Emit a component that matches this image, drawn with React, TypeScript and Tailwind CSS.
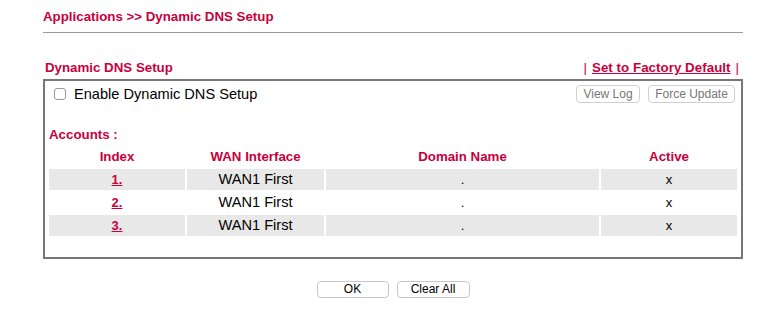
import React from "react";

const RED = "text-[#c8003c]";

export default function App() {
  const rows = ["1.", "2.", "3."];
  return (
    <div className="w-[783px] h-[309px] bg-white overflow-hidden" style={{ fontFamily: '"Liberation Sans", Arial, sans-serif' }}>
      <div className="ml-[43px] w-[700px] pt-[8px]">
        <div className={`text-[13.3px] leading-[18px] font-bold ${RED}`}>Applications &gt;&gt; Dynamic DNS Setup</div>
        <div className="mt-[6px] h-px bg-[#999]" />
        <div className="mt-[27px] flex items-center justify-between pl-[2px] pr-[4px] h-[16px]">
          <div className={`text-[13.3px] leading-[16px] font-bold ${RED}`}>Dynamic DNS Setup</div>
          <div className={`flex items-center text-[13.3px] leading-[16px] font-bold ${RED}`}>
            <span className="font-normal">|</span>
            <span className="ml-[5px] underline tracking-[0.05px]">Set to Factory Default</span>
            <span className="ml-[5px] font-normal">|</span>
          </div>
        </div>
        <div className="mt-[3px] border-2 border-[#777] px-[2px] pt-[4px] pb-[19px]">
          <div className="flex items-center justify-between h-[18px]">
            <div className="flex items-center ml-[7px]">
              <div className="w-[12px] h-[12px] rounded-[3px] border border-[#999] bg-white" />
              <span className="ml-[8px] text-[14.6px] leading-[18px] text-black">Enable Dynamic DNS Setup</span>
            </div>
            <div className="flex gap-[8px] mr-[4px]">
              <button className="w-[64px] h-[18px] rounded-[4px] border border-[#d0d0d0] bg-white text-[12px] leading-[16px] text-[#777]">View Log</button>
              <button className="w-[87px] h-[18px] rounded-[4px] border border-[#d0d0d0] bg-white text-[12px] leading-[16px] text-[#777]">Force Update</button>
            </div>
          </div>
          <div className={`mt-[24px] ml-[2px] text-[13.3px] leading-[16px] font-bold ${RED}`}>Accounts :</div>
          <table className="mt-[2px] w-[692px] border-separate border-spacing-[2px] table-fixed leading-[20px]">
            <colgroup>
              <col className="w-[136px]" />
              <col className="w-[137px]" />
              <col className="w-[273px]" />
              <col className="w-[136px]" />
            </colgroup>
            <thead>
              <tr className={`text-[13.3px] font-bold ${RED}`}>
                <th className="p-0 h-[20px] leading-[20px] font-bold">Index</th>
                <th className="p-0 h-[20px] leading-[20px] font-bold">WAN Interface</th>
                <th className="p-0 h-[20px] leading-[20px] font-bold">Domain Name</th>
                <th className="p-0 h-[20px] leading-[20px] font-bold">Active</th>
              </tr>
            </thead>
            <tbody>
              {rows.map((r, i) => (
                <tr key={r} className={i % 2 === 0 ? "bg-[#e8e8e8]" : "bg-white"}>
                  <td className="p-0 h-[21px] leading-[21px] text-[13px] text-center">
                    <span className={`font-bold underline ${RED}`}>{r}</span>
                  </td>
                  <td className="p-0 h-[21px] leading-[21px] text-center text-[14.6px] text-black">WAN1 First</td>
                  <td className="p-0 h-[21px] leading-[21px] text-center text-[13px] text-black">.</td>
                  <td className="p-0 h-[21px] leading-[21px] text-center text-[13px] text-black">x</td>
                </tr>
              ))}
            </tbody>
          </table>
        </div>
        <div className="mt-[22px] flex justify-center gap-[8px]">
          <button className="w-[72px] h-[17px] rounded-[4px] border border-[#c8c8c8] bg-white text-[12px] leading-[15px] text-black">OK</button>
          <button className="w-[73px] h-[17px] rounded-[4px] border border-[#c8c8c8] bg-white text-[12px] leading-[15px] text-black">Clear All</button>
        </div>
      </div>
    </div>
  );
}
